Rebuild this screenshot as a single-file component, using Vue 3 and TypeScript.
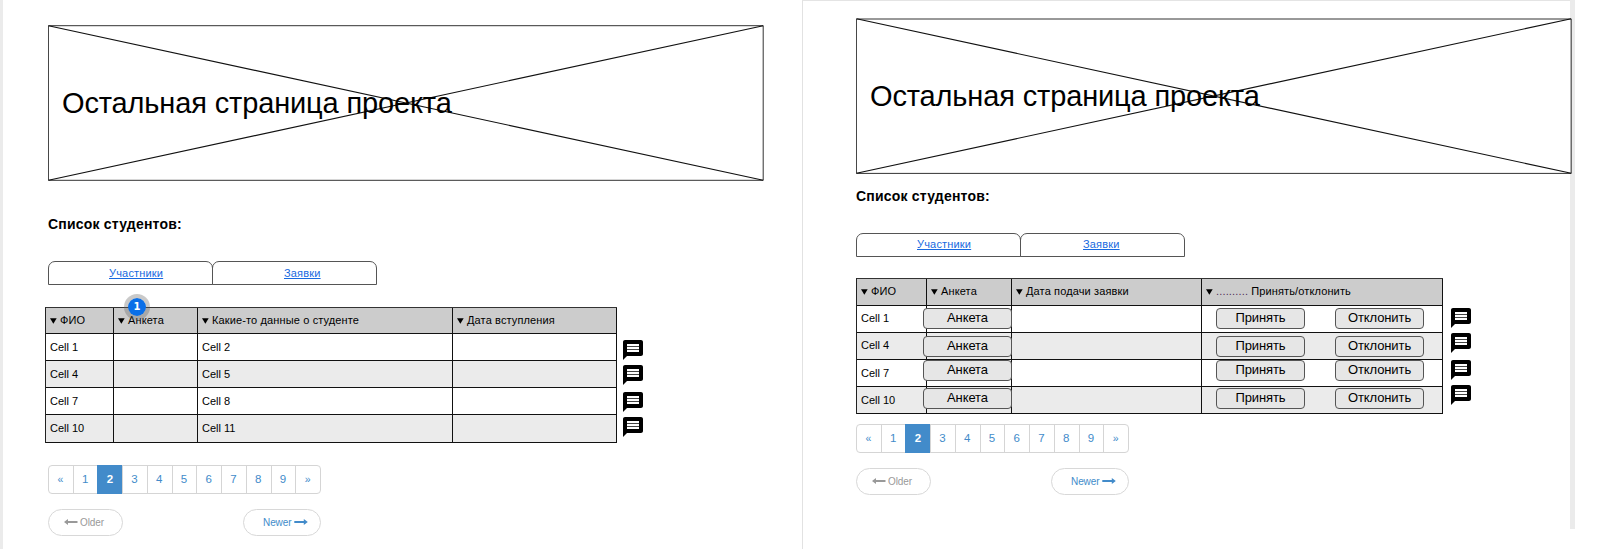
<script setup lang="ts">
interface Column {
  label: string
  dots?: string
}
interface Board {
  id: string
  columns: Column[]
  rows: string[][]
  actions: boolean
  marker: boolean
}

const boards: Board[] = [
  {
    id: 'members',
    columns: [
      { label: 'ФИО' },
      { label: 'Анкета' },
      { label: 'Какие-то данные о студенте' },
      { label: 'Дата вступления' },
    ],
    rows: [
      ['Cell 1', '', 'Cell 2', ''],
      ['Cell 4', '', 'Cell 5', ''],
      ['Cell 7', '', 'Cell 8', ''],
      ['Cell 10', '', 'Cell 11', ''],
    ],
    actions: false,
    marker: true,
  },
  {
    id: 'requests',
    columns: [
      { label: 'ФИО' },
      { label: 'Анкета' },
      { label: 'Дата подачи заявки' },
      { label: 'Принять/отклонить', dots: '..........' },
    ],
    rows: [
      ['Cell 1', '', '', ''],
      ['Cell 4', '', '', ''],
      ['Cell 7', '', '', ''],
      ['Cell 10', '', '', ''],
    ],
    actions: true,
    marker: false,
  },
]

const pages = ['«', '1', '2', '3', '4', '5', '6', '7', '8', '9', '»']
</script>

<template>
  <div class="canvas">
    <section v-for="board in boards" :key="board.id" class="board" :class="board.id">
      <div class="hero">
        <svg class="hero-frame" width="716" height="157" viewBox="0 0 716 157">
          <path v-if="board.id === 'members'" class="outline" d="M.4 .7H715.2V155.3H.4Z" />
          <path v-else class="outline" d="M.4 1H715.2V155.4H.4Z" />
          <path class="diagonal" d="M.5 .7L715.2 155.3M715.2 .7L.5 155.3" />
        </svg>
        <span class="hero-text">Остальная страница проекта</span>
      </div>

      <h2 class="heading">Список студентов:</h2>

      <nav class="tabs">
        <div class="tab"><a class="tab-link">Участники</a></div>
        <div class="tab"><a class="tab-link">Заявки</a></div>
      </nav>

      <div class="listing">
        <div class="table">
          <div class="row head">
            <div v-for="column in board.columns" :key="column.label" class="cell">
              <svg class="sort" width="7" height="6" viewBox="0 0 7 6"><path d="M0 .3H6.7L3.35 5.8Z" /></svg>
              <span v-if="column.dots" class="dots">{{ column.dots }}</span>
              <span class="label">{{ column.label }}</span>
            </div>
          </div>
          <div v-for="(row, r) in board.rows" :key="r" class="row">
            <div v-for="(text, c) in row" :key="c" class="cell">
              <button v-if="board.actions && c === 1" class="btn form">Анкета</button>
              <template v-else-if="board.actions && c === 3">
                <button class="btn accept">Принять</button>
                <button class="btn reject">Отклонить</button>
              </template>
              <template v-else>{{ text }}</template>
            </div>
          </div>
          <span v-if="board.marker" class="marker">1</span>
        </div>
        <div class="notes">
          <svg v-for="n in 4" :key="n" class="note" width="20" height="20" viewBox="2 2 20 20">
            <path
              d="M20 2H4c-1.1 0-2 .9-2 2v18l4-4h14c1.1 0 2-.9 2-2V4c0-1.1-.9-2-2-2zM6 6h12v8H6z"
              fill-rule="evenodd"
            />
            <path class="note-lines" d="M6 8h12v1H6zM6 11h12v1H6z" />
          </svg>
        </div>
      </div>

      <div class="pagination">
        <span
          v-for="page in pages"
          :key="page"
          class="page"
          :class="{ active: page === '2', edge: page === '«' || page === '»' }"
          >{{ page }}</span
        >
      </div>

      <div class="pager">
        <span class="pill older">
          <svg width="14" height="8" viewBox="0 0 14 8"><path d="M4 1V3.1H13.5V5H4V7L0 4Z" /></svg>
          <span>Older</span>
        </span>
        <span class="pill newer">
          <span>Newer</span>
          <svg width="14" height="8" viewBox="0 0 14 8"><path d="M9.8 1V3.1H.3V5H9.8V7L13.8 4Z" /></svg>
        </span>
      </div>
    </section>
  </div>
</template>

<style>
html,
body {
  margin: 0;
  overflow: hidden;
  background: #fff;
}
</style>

<style scoped>
.canvas {
  display: flex;
  width: 1600px;
  height: 549px;
  overflow: hidden;
  color: #000;
  font: 11px 'Liberation Sans', Arial, sans-serif;
}
.board {
  box-sizing: border-box;
}
.members {
  width: 802px;
  height: 549px;
  padding: 25px 0 0 45px;
  border-left: 3px solid #ebebeb;
}
.requests {
  position: relative;
  width: 773px;
  height: 549px;
  padding: 17px 0 0 53px;
  border-top: 1px solid #e4e4e4;
  border-left: 1px solid #e2e2e2;
}
.requests::after {
  content: '';
  position: absolute;
  top: -1px;
  right: 0;
  width: 5px;
  height: 529px;
  background: #ebebeb;
}
.hero {
  position: relative;
  z-index: 1;
  box-sizing: border-box;
  width: 716px;
  height: 156px;
  padding: 62px 0 0 14px;
}
.hero-frame {
  position: absolute;
  top: 0;
  left: 0;
  fill: none;
}
.outline {
  stroke: #333;
}
.diagonal {
  stroke: #111;
  stroke-width: 1.1;
}
.hero-text {
  position: relative;
  display: block;
  font-size: 29px;
  line-height: 32px;
  letter-spacing: -0.14px;
  white-space: nowrap;
}
.heading {
  margin: 35px 0 0;
  font-size: 14px;
  line-height: 16px;
  letter-spacing: 0.2px;
}
.requests .heading {
  margin-top: 14px;
}
.tabs {
  display: flex;
  margin-top: 29px;
}
.tab {
  box-sizing: border-box;
  width: 165px;
  height: 24px;
  padding: 5px 0 0 60px;
  border: 1px solid #555;
  border-radius: 7px 7px 0 0;
}
.tab + .tab {
  margin-left: -1px;
  padding-left: 71px;
}
.requests .tab {
  padding-top: 4px;
}
.requests .tab + .tab {
  padding-left: 62px;
}
.tab-link {
  display: block;
  color: #1769e0;
  line-height: 13px;
  letter-spacing: 0.18px;
  text-decoration: underline;
}
.listing {
  display: flex;
  height: 136px;
  margin: 22px 0 0 -3px;
}
.requests .listing {
  margin: 21px 0 0;
}
.table {
  position: relative;
  border-top: 1px solid #333;
  border-left: 1px solid #222;
}
.row {
  display: grid;
  grid-template-columns: 68px 84px 255px 164px;
  height: 27px;
}
.requests .row {
  grid-template-columns: 70px 85px 190px 241px;
}
.members .head {
  height: 26px;
}
.members .row:nth-child(5) {
  height: 28px;
}
.cell {
  box-sizing: border-box;
  display: flex;
  align-items: center;
  padding-left: 4px;
  border-right: 1px solid #111;
  border-bottom: 1px solid #111;
  white-space: nowrap;
}
.row:nth-child(odd) .cell {
  background: #ebebeb;
}
.row:nth-child(even) .cell {
  background: #fff;
}
.row.head .cell {
  padding-bottom: 2px;
  background: #ccc;
  letter-spacing: 0.13px;
}
.requests .row:nth-child(2) .cell,
.requests .row:nth-child(3) .cell,
.members .row:nth-child(5) .cell {
  padding-bottom: 2px;
}
.sort {
  flex: none;
  margin: 2px 3px 0 0;
}
.dots {
  margin-right: 3px;
  color: #513058;
  letter-spacing: 0.16px;
}
.btn {
  position: relative;
  z-index: 1;
  flex: none;
  align-self: flex-start;
  box-sizing: border-box;
  height: 21px;
  margin: 2px 0 0;
  padding: 0 0 2px;
  border: 1px solid #555;
  border-radius: 4px;
  background: #e6e6e6;
  color: #000;
  font: 13px/17px 'Liberation Sans', Arial, sans-serif;
  letter-spacing: -0.1px;
}
.row:nth-child(3) .btn {
  margin-top: 3px;
}
.row:nth-child(4) .btn {
  margin-top: 0;
}
.row:nth-child(5) .btn {
  margin-top: 1px;
}
.btn.form {
  width: 89px;
  margin-left: -8px;
}
.btn.accept {
  width: 89px;
  margin-left: 10px;
}
.btn.reject {
  width: 89px;
  margin-left: 30px;
}
.marker {
  position: absolute;
  top: -14px;
  left: 78px;
  width: 18px;
  height: 18px;
  border: 4px solid rgba(100, 100, 100, 0.35);
  border-radius: 50%;
  background: #0a6fe8;
  background-clip: padding-box;
  color: #fff;
  font: bold 10px/18px 'DejaVu Sans', sans-serif;
  text-align: center;
}
.notes {
  display: flex;
  flex-direction: column;
  margin-left: 6px;
  padding-top: 33px;
}
.requests .notes {
  margin-left: 8px;
  padding-top: 30px;
}
.note {
  flex: none;
  margin-bottom: 4.5px;
}
.note:nth-child(2) {
  margin-bottom: 7.5px;
}
.note:nth-child(3) {
  margin-bottom: 5px;
}
.note:nth-child(4) {
  margin-bottom: 0;
}
.note-lines {
  fill: #444;
}
.pagination {
  display: flex;
  box-sizing: border-box;
  width: 273px;
  height: 29px;
  margin-top: 22px;
  border: 1px solid #d5d5d5;
  border-radius: 4px;
}
.requests .pagination {
  margin-top: 10px;
}
.page {
  flex: 1;
  box-sizing: border-box;
  padding-right: 1px;
  border-left: 1px solid #d5d5d5;
  color: #428bca;
  font-size: 11.5px;
  line-height: 26px;
  text-align: center;
}
.page:first-child {
  border-left: 0;
}
.page.edge {
  font-size: 10.5px;
}
.page.active {
  margin: -1px 0;
  border-color: #428bca;
  background: #428bca;
  color: #fff;
  font-weight: bold;
  line-height: 28px;
}
.pager {
  display: flex;
  justify-content: space-between;
  width: 273px;
  margin-top: 15px;
}
.pill {
  box-sizing: border-box;
  display: flex;
  align-items: center;
  height: 27px;
  padding-bottom: 1px;
  border: 1px solid #d8d8d8;
  border-radius: 14px;
  font-size: 10px;
  letter-spacing: -0.08px;
}
.older {
  width: 75px;
  padding-left: 15px;
  color: #999;
  fill: #999;
  gap: 2px;
}
.newer {
  width: 78px;
  padding-left: 19px;
  color: #428bca;
  fill: #428bca;
  gap: 2px;
}
</style>
